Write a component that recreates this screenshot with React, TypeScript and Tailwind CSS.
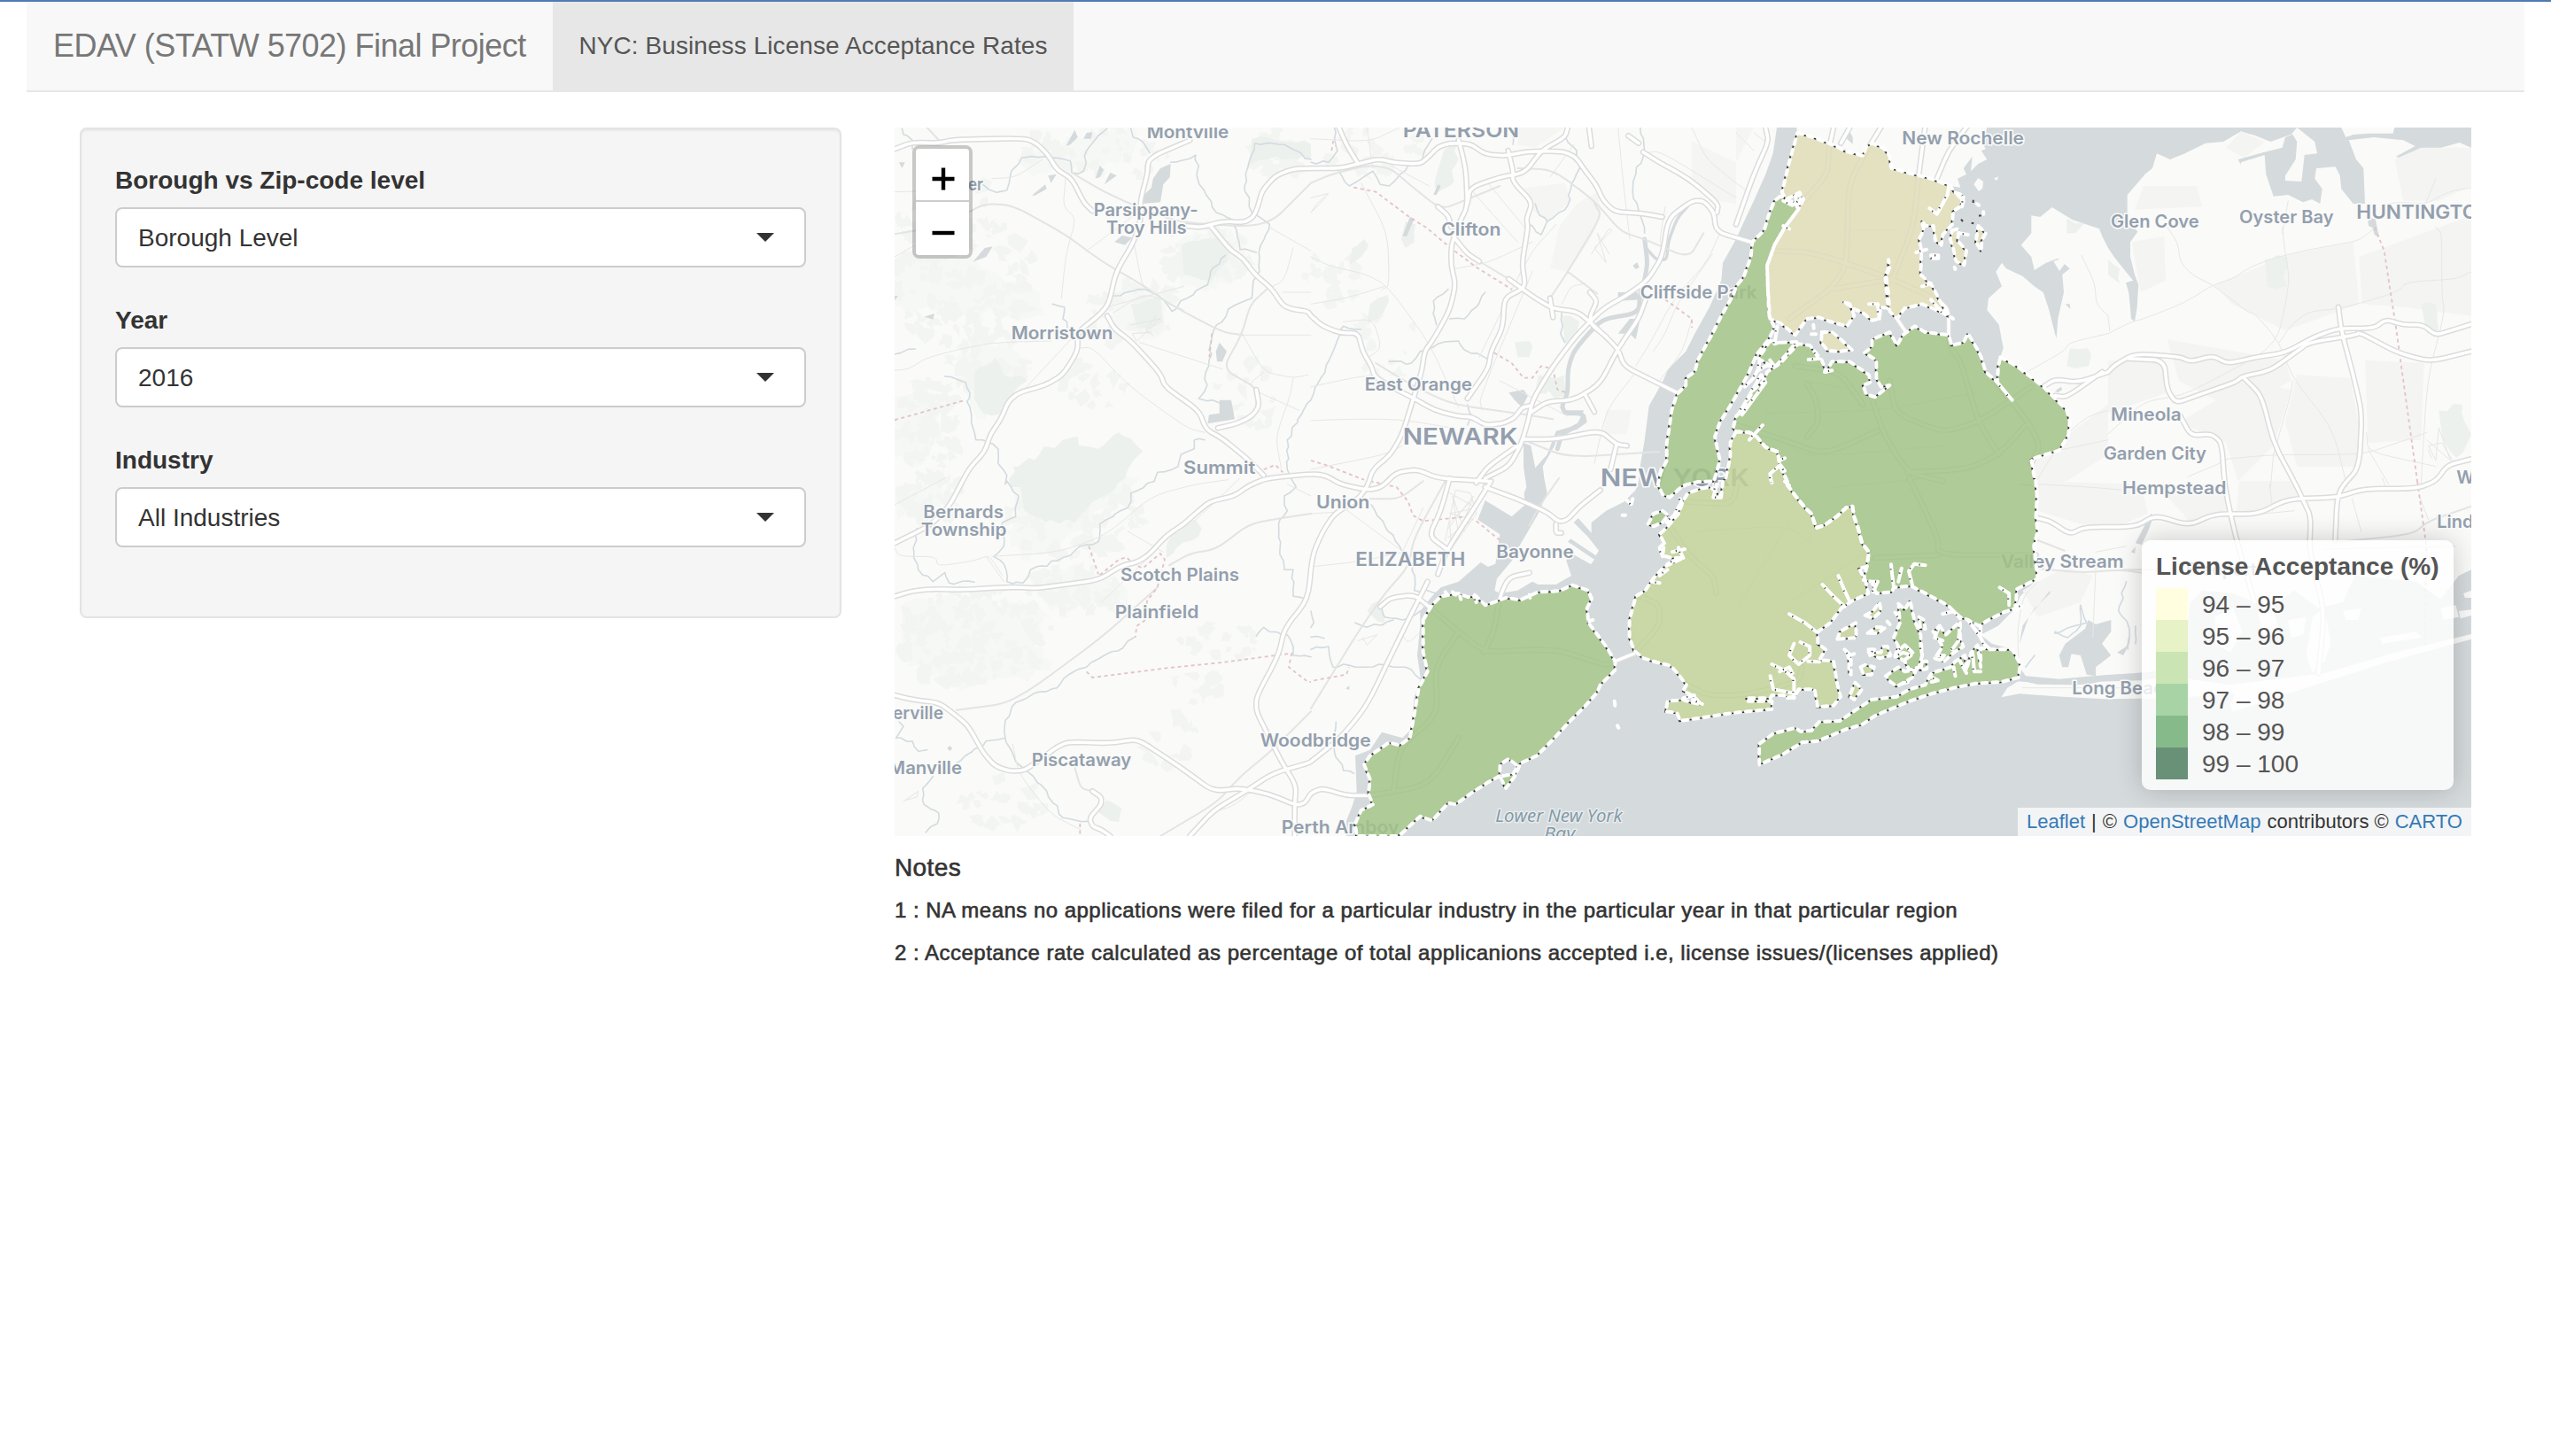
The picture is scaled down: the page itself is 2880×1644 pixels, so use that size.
import React from "react";

/* ---------- map geometry ---------- */

type TileId = "A" | "B" | "C" | "D" | "E" | "F" | "G" | "H";

// Each map tile has an origin on the page and a local grid: [x, y, unit width, unit height].
const TILES: Record<TileId, [number, number, number, number]> = {
  A: [1000, 130, 1 / 3, 1 / 3],
  B: [1480, 130, 1 / 3, 1 / 3],
  C: [1960, 130, 1 / 3, 1 / 3],
  D: [2380, 130, 1 / 3, 1 / 3],
  E: [1000, 540, 1 / 3, 1 / 3],
  F: [1480, 540, 1 / 3, 1 / 3],
  G: [1820, 540, 0.35714, 1 / 3],
  H: [2280, 540, 0.34439, 1 / 3],
};

function pt(t: TileId, x: number, y: number): [number, number] {
  const [ox, oy, sx, sy] = TILES[t];
  return [ox + x * sx, oy + y * sy];
}

// "A 1,2 3,4 B 5,6" -> one list of page points.
function pts(src: string): [number, number][] {
  let tile: TileId = "A";
  const out: [number, number][] = [];
  for (const w of src.trim().split(/\s+/)) {
    if (w.length === 1 && w >= "A" && w <= "H") {
      tile = w as TileId;
      continue;
    }
    const [x, y] = w.split(",").map(Number);
    out.push(pt(tile, x, y));
  }
  return out;
}

function line(src: string): string {
  return "M" + pts(src).map(([x, y]) => `${x.toFixed(1)} ${y.toFixed(1)}`).join("L");
}

// Line with its corners rounded, for roads.
function curve(src: string): string {
  const p = pts(src);
  if (p.length < 3) return line(src);
  let d = `M${p[0][0].toFixed(1)} ${p[0][1].toFixed(1)}`;
  for (let i = 1; i < p.length - 1; i++) {
    const a = p[i - 1], b = p[i], c = p[i + 1];
    const m1 = [b[0] + (a[0] - b[0]) * 0.35, b[1] + (a[1] - b[1]) * 0.35];
    const m2 = [b[0] + (c[0] - b[0]) * 0.35, b[1] + (c[1] - b[1]) * 0.35];
    d += `L${m1[0].toFixed(1)} ${m1[1].toFixed(1)}Q${b[0].toFixed(1)} ${b[1].toFixed(1)} ${m2[0].toFixed(1)} ${m2[1].toFixed(1)}`;
  }
  const e = p[p.length - 1];
  return d + `L${e[0].toFixed(1)} ${e[1].toFixed(1)}`;
}

const area = (s: string) => line(s) + "Z";

function rng(seed: number) {
  let s = seed;
  return () => {
    s = (s * 1664525 + 1013904223) % 4294967296;
    return s / 4294967296;
  };
}

// Line with small irregular wiggles, for streams and shores.
function wiggle(src: string, amp: number, step: number, seed: number): string {
  const r = rng(seed);
  const p = pts(src);
  let d = `M${p[0][0].toFixed(1)} ${p[0][1].toFixed(1)}`;
  for (let i = 1; i < p.length; i++) {
    const a = p[i - 1], b = p[i];
    const n = Math.max(1, Math.round(Math.hypot(b[0] - a[0], b[1] - a[1]) / step));
    for (let k = 1; k <= n; k++) {
      const j = k === n ? 0 : amp;
      d += `L${(a[0] + ((b[0] - a[0]) * k) / n + (r() - 0.5) * j).toFixed(1)} ${(a[1] + ((b[1] - a[1]) * k) / n + (r() - 0.5) * j).toFixed(1)}`;
    }
  }
  return d;
}

// Scatter of wooded patches: [tile, cx, cy, rx, ry, count].
const WOODS: [TileId, number, number, number, number, number][] = [
  ["A", 260, 560, 240, 230, 120],
  ["A", 330, 860, 160, 130, 50],
  ["A", 140, 1060, 110, 170, 70],
  ["A", 200, 330, 170, 150, 34],
  ["A", 700, 130, 260, 90, 40],
  ["A", 1080, 470, 160, 120, 40],
  ["A", 820, 660, 180, 110, 40],
  ["A", 1330, 120, 100, 90, 40],
  ["A", 690, 930, 120, 80, 20],
  ["A", 1230, 950, 110, 120, 20],
  ["E", 300, 540, 270, 170, 130],
  ["E", 640, 140, 230, 130, 80],
  ["E", 150, 70, 130, 80, 40],
  ["E", 640, 380, 180, 80, 44],
  ["E", 1120, 560, 160, 70, 24],
  ["E", 1050, 720, 90, 60, 12],
  ["E", 400, 1090, 150, 90, 22],
  ["E", 980, 900, 120, 90, 14],
  ["B", 220, 120, 180, 80, 24],
  ["B", 80, 560, 110, 110, 18],
  ["B", 250, 760, 110, 160, 14],
  ["D", 300, 200, 250, 120, 20],
  ["D", 700, 480, 330, 160, 40],
  ["D", 900, 700, 300, 200, 40],
  ["D", 300, 650, 200, 150, 18],
  ["D", 1050, 950, 160, 180, 20],
];

function woodsPath(): string {
  let d = "";
  WOODS.forEach(([t, cx, cy, rx, ry, n], i) => {
    const r = rng(77 + i * 131);
    for (let k = 0; k < n; k++) {
      const a = r() * Math.PI * 2;
      const q = Math.sqrt(r());
      const x = cx + Math.cos(a) * q * rx;
      const y = cy + Math.sin(a) * q * ry;
      const v = 5 + Math.floor(r() * 5);
      const size = 10 + r() * 22;
      for (let m = 0; m < v; m++) {
        const b = (m / v) * Math.PI * 2 + r() * 0.7;
        const q2 = size * (0.25 + r() * 1.1);
        const [px, py] = pt(t, Math.max(t === "A" || t === "E" ? 30 : -99, x + Math.cos(b) * q2), y + Math.sin(b) * q2);
        d += `${m ? "L" : "M"}${px.toFixed(1)} ${py.toFixed(1)}`;
      }
      d += "Z";
    }
  });
  return d;
}

// Large, very pale wooded tracts.
const TRACTS = [
  "A 30,490 120,470 250,480 330,520 400,560 520,600 540,680 450,700 380,660 300,690 200,640 110,660 30,650",
  "A 240,820 340,780 440,800 500,860 460,920 400,990 310,1030 270,940",
  "A 30,950 120,900 180,960 190,1080 130,1180 30,1160",
  "A 440,150 560,110 680,60 820,42 860,90 800,150 700,190 620,150 500,210",
  "A 990,430 1130,390 1230,420 1210,520 1120,590 1000,590",
  "A 760,600 860,580 950,640 960,720 870,760 780,720",
  "E 60,420 200,400 320,420 460,410 560,470 500,570 560,620 480,690 380,680 260,720 140,660 50,600",
  "E 430,40 600,0 860,0 780,90 640,180 560,250 460,280 420,200 450,120",
  "E 30,30 180,0 220,60 150,110 40,140",
  "E 480,330 620,300 700,330 800,360 820,430 720,400 560,450",
];

const PARKS = [
  "A 300,870 370,820 400,880 460,880 480,900 430,950 400,1000 330,1010 300,960",
  "A 420,1260 430,1190 520,1150 600,1100 650,1090 655,1120 720,1130 790,1075 870,1140 820,1200 780,1260",
  "E 450,0 780,0 760,50 700,80 640,150 540,150 470,110",
  "E 950,230 970,190 1050,140 1070,170 1040,210 950,270",
  "E 720,1130 750,1090 800,1120 790,1165 760,1160",
  "B 450,120 495,105 500,150 470,240 430,260 420,220",
  "B 130,510 140,450 180,420 195,440 170,480",
  "B 320,360 355,370 350,430 320,450 305,420",
  "B 200,640 260,610 245,670 190,705",
  "B 850,680 910,700 900,760 860,770",
  "B 770,880 860,880 860,950 760,940",
  "B 690,770 740,765 740,820 700,820",
  "F 190,450 230,415 240,450 250,490 210,470",
  "C 1120,350 1180,365 1150,400 1120,400",
  "C 1130,790 1190,790 1195,850 1120,850",
  "A 1000,440 1130,400 1180,450 1100,560 1010,540",
  "A 1240,80 1440,100 1440,150 1290,150 1230,170",
  "A 830,640 930,620 940,700 850,720",
  "D 530,490 605,480 605,580 540,580",
  "D 1060,640 1110,640 1120,730 1080,740",
  "D 1120,1000 1200,980 1230,1080 1180,1160 1130,1080",
  "D 0,490 40,520 40,570 0,540",
];

const URBAN = [
  "B 700,42 860,42 760,110 700,100",
  "B 840,380 900,300 970,260 985,340 940,430 870,530 810,520",
  "B 700,250 860,230 880,290 800,360 760,330",
  "B 1290,90 1440,160 1440,300 1380,290 1290,220",
  "B 1000,1000 1085,1000 1070,1080 990,1080",
  "C 0,160 60,42 0,42",
  "D 80,430 190,410 195,560 110,600",
  "D 120,240 300,240 320,310 90,320",
  "D 400,110 450,55 530,90 460,145",
  "D 360,575 620,470 830,430 850,640 600,730 420,640",
  "D 850,480 1230,340 1230,680 1000,650 860,640",
  "D 970,150 1060,110 1230,110 1230,240 1120,290 1000,290",
  "D 200,760 600,830 620,900 430,1000 240,900",
  "D 0,830 190,840 200,940 0,1010",
  "D 240,1040 480,900 620,930 560,1120 440,1240 400,1110",
  "D 640,880 820,890 850,1050 850,1190 640,1190 600,1040",
  "D 870,830 1070,840 1060,1100 880,1110",
  "C 1000,1180 1140,1070 1260,980 1260,1150 1120,1240 1010,1250",
  "H 60,10 400,20 420,120 330,160 200,155 60,110",
  "H 450,20 680,20 690,110 560,150",
  "H 720,10 890,10 910,60 790,120 710,120",
  "H 10,380 150,300 240,330 200,420 60,470",
];

const WATER_MAIN =
  "C 138,42 125,130 100,200 60,290 20,375 B 1440,420 1395,500 1390,560 1350,650 1300,740 1270,800 1210,860 1190,905 1145,985 1130,1100 1115,1190 1110,1240 " +
  "F 1100,40 1060,80 1000,110 950,150 950,185 905,135 890,150 940,200 975,245 965,262 880,205 870,215 960,275 948,292 875,250 865,280 882,330 830,360 770,360 750,350 700,380 640,390 622,380 630,340 680,280 700,240 735,180 770,120 800,50 790,0 " +
  "B 785,1190 825,1120 835,1085 900,1065 935,1040 930,1015 850,1000 840,985 855,1000 925,1000 900,1050 830,1070 800,1150 760,1195 745,1120 720,1110 720,1190 730,1260 " +
  "F 722,50 725,90 680,130 590,75 565,140 640,190 625,290 600,300 575,285 500,350 440,370 410,400 370,450 370,500 360,600 372,680 350,740 340,850 310,880 240,860 200,920 150,940 155,1060 140,1110 120,1160 120,1212 " +
  "H 1481,1212 1481,0 D 1230,42";

const WESTCHESTER =
  "C 205,42 208,60 325,100 430,138 460,95 500,115 520,140 525,180 600,200 660,215 725,240 760,245 750,215 780,200 770,180 800,140 795,190 820,165 850,150 830,120 845,115 835,95 850,42";

const LONG_ISLAND =
  "C 895,820 905,790 890,710 850,660 855,620 900,580 880,530 900,500 915,520 970,545 1010,580 1040,600 1060,660 1080,740 1085,755 1090,690 1110,600 1105,540 1130,520 1090,485 1050,500 1010,525 1000,480 965,440 1000,400 1000,340 1030,345 1070,312 1140,355 1230,385 1240,410 " +
  "D 0,450 20,480 60,530 85,560 60,568 70,600 75,650 78,690 90,700 98,650 103,575 90,540 75,480 75,430 100,395 65,350 65,270 125,200 150,180 165,130 210,150 260,130 330,95 390,90 450,55 500,70 550,90 620,65 640,42 700,90 708,130 665,135 655,225 600,222 600,205 635,150 640,90 625,65 600,75 590,110 530,125 440,150 460,190 470,230 455,250 445,190 450,160 530,135 535,200 560,275 610,270 660,295 690,285 718,300 725,250 700,215 705,180 770,175 785,205 790,250 830,300 870,300 865,180 840,150 815,85 900,75 1000,85 1040,105 975,140 1000,150 1060,160 1085,222 1108,210 1100,160 1050,115 1100,118 1190,93 1230,110 1230,1260 " +
  "H 1481,310 1440,330 1380,410 1300,350 1100,330 1060,420 980,440 900,380 820,440 700,390 600,380 560,420 550,500 520,600 480,650 380,660 300,665 240,670 130,680 20,670 0,640 G 1265,580 1200,560 1165,530 1220,500 1275,440 1290,400 1345,340 1333,230 1340,100 1338,0 C 1005,1230 1000,1165 1095,1135 1130,1040 1120,1000 1040,920 950,850";

const BEACH = "H -60,742 -40,710 0,685 60,698 170,700 230,690 400,685 500,672 690,700 1000,660 1250,585 1481,528 1481,545 1200,625 1000,690 700,790 690,770 705,730 500,745 280,748 140,740 0,730";

const ISLANDS = [
  "C 805,235 820,213 837,225 835,248 822,258",
  "C 872,215 888,208 884,222",
  "C 1075,495 1095,488 1112,505 1095,528",
  "D 790,42 970,42 965,62 880,62 830,66 805,75",
  "H 640,470 700,440 730,520 690,590 640,560",
  "H 780,450 830,430 850,510 800,540",
  "H 880,480 940,470 930,530 890,540",
  "H 960,470 1000,440 1020,560 1000,620 960,660 940,600",
  "H 1060,450 1120,440 1110,480 1070,480",
  "H 1180,540 1300,520 1320,540 1190,560",
  "H 1380,440 1430,430 1440,470 1390,480",
  "H 1455,390 1481,380 1481,405 1460,405",
  "H 1440,450 1481,445 1481,465 1445,475",
];

const PONDS = [
  "A 905,215 930,180 965,165 962,210 940,235 930,295 870,300 875,270 900,245",
  "A 775,430 800,408 835,415 810,440",
  "A 610,105 640,50 650,75 625,100",
  "A 710,215 725,170 738,185 725,210",
  "A 740,235 760,195 782,205",
  "A 495,272 540,235 545,250 505,272",
  "A 550,205 578,200 560,230",
  "A 295,497 335,450 362,445 340,480",
  "A 130,683 165,672 160,692",
  "A 1118,800 1130,770 1155,800 1140,835 1122,835",
  "A 1130,965 1170,965 1182,1030 1090,1045 1095,1015 1130,1010",
  "A 680,60 700,58 695,80 670,80",
  "A 45,160 65,160 55,180",
  "A 30,612 42,612 30,628",
  "B 310,410 335,345 350,350 325,410",
  "B 415,270 430,235 440,240 425,270",
  "B 670,940 720,930 735,950 715,990 690,965",
  "B 1090,510 1105,498 1112,515 1100,522",
  "B 1040,600 1105,600 1110,625 1040,630",
  "B 1040,740 1080,690 1115,690 1100,760 1080,740",
  "C 378,42 395,75 395,98 375,80",
  "C 1080,935 1100,920 1105,930 1090,940",
  "C 1115,640 1130,640 1132,657",
  "D 880,350 905,350 918,415 902,405 895,380 882,375",
  "H 380,220 430,120 440,125 425,170 400,225",
  "H 365,250 380,232 378,255",
  "H 1200,325 1215,330 1205,345",
  "F 118,712 130,703 130,718",
  "E 208,915 217,906 226,915 217,924",
  "H 130,600 150,560 215,510 225,480 250,495 300,480 300,520 270,560 300,600 250,640 250,670 220,665 200,600 170,595 160,640 140,640",
  "H 0,560 30,470 100,380 100,390 50,440 10,500",
  "H 320,590 350,570 365,530 360,560 340,600",
];

const STREAMS = [
  "A 55,45 60,65 90,85 90,115",
  "A 330,235 375,262 410,255 425,190 450,165 460,145 540,140 625,155 630,195 670,190 680,120 750,45",
  "A 830,45 838,75 870,90 895,128",
  "A 965,160 1050,135 1062,235 1085,270 1120,330 1175,355 1190,410 1200,455 1255,465",
  "A 1150,475 1100,530 1090,575 1020,620 970,665 940,625 880,590 770,612",
  "A 1440,150 1350,100 1250,95 1230,160 1215,240 1240,330 1300,370 1270,440 1265,530 1245,560 1240,620 1180,645 1110,730 1095,830 1080,935 1060,960 1130,975",
  "A 565,640 605,650 600,690 615,720",
  "A 200,885 270,905 285,940 275,970 290,1015 305,1100 340,1105 380,1130 380,1180 410,1220 405,1250 E 410,10 450,60 440,130 395,150 400,230 365,265 400,290 410,350 465,355 490,310 580,280 680,225 720,215 725,155 820,100 830,50 910,10 A 920,1210 990,1190 1000,1150 1045,1130 1045,1100 1080,1100",
  "A 30,810 100,792",
  "A 1440,965 1410,1010 1360,1100 1360,1200 1390,1260 E 1350,60 1360,110 1335,140 1335,240 1350,310 1380,310 1380,400 1430,410",
  "E 105,170 95,270 110,310 160,350 200,320 215,355 300,352",
  "E 840,540 785,585 740,600 680,640 620,665 580,710 500,730 440,760 405,820 405,880 440,960 500,1010 545,1060 600,1150 700,1170",
  "E 240,965 340,890 405,880",
  "E 45,825 60,840 35,880 90,890 110,925 140,920",
  "E 160,1010 125,1050 130,1105 180,1135 175,1170 135,1200",
  "E 1255,535 1280,505 1300,520 1360,530 1380,570 1380,600 1440,605",
  "B 0,160 60,160 90,120 80,42",
  "B 95,190 130,240 210,190 235,235 265,240 330,170 380,160 385,120 410,80",
  "B 675,42 685,100",
  "B 760,300 775,340 800,360 840,330 870,305 880,250 910,180 900,120 865,80",
  "B 740,370 780,405 800,360",
  "B 1115,42 1130,120 1100,200 1090,260 1105,300 1130,400",
  "B 590,600 560,650 520,690 470,690",
  "B 465,590 415,630 425,710",
  "B 265,835 340,840 370,800 430,775 500,765 520,795 605,830",
  "B 170,725 110,715 95,750 0,965",
  "B 850,670 845,740 860,770",
  "B 530,980 545,1020 530,1050",
  "F 205,90 250,160 300,230 345,290 350,380 430,390",
  "F 240,440 250,470 310,480 370,450",
  "F 150,490 190,505 280,480",
  "F 0,580 60,570 75,640 110,630 180,640 230,630 280,640 320,640 370,680",
  "F 0,450 10,490 0,505",
  "F 0,538 45,542",
  "F 85,825 80,930 110,990 145,1000",
  "G 1480,430 1480,500 1440,540 1400,520",
  "H 200,430 220,490 180,500 115,525",
  "H 350,350 325,450 360,510 355,580",
  "H 380,500 380,560",
  "H 20,640 50,600",
];

const RIVERS_WIDE: [string, number][] = [
  ["B 1130,420 1140,500 1130,560 1115,600 1110,670 990,690 940,740 890,800 870,860 870,940 850,985 860,1010 920,1010 925,1040 850,1080 835,1130", 5],
  ["B 1275,310 1240,350 1210,430 1205,490 1170,490 1135,450", 3.4],
  ["H -10,680 60,685 130,690 220,692 300,672 420,672 520,660", 5],
];

const COUNTY = [
  "A 30,1033 270,965",
  "B 145,245 220,260 340,350 390,380 455,435 480,455 560,515 680,590",
  "B 620,805 680,840 720,890 750,890 780,850 820,860 835,930 865,940",
  "B 1200,625 1290,690 1290,720",
  "B 0,1170 50,1185 180,1235",
  "F 200,10 290,30 330,80 345,125 380,145 530,130",
  "F 560,145 640,210",
  "E 688,230 720,325",
  "E 725,328 790,275 815,268 840,290 870,305 930,255 945,275 920,370 885,415 880,480 850,500 845,540",
  "E 680,655 700,675 960,642 1130,625 1375,593 1365,640 1430,690 1440,690",
  "E 658,1170 658,1212",
  "F 10,685 120,665 130,640",
  "A 1280,1200 1320,1185 1345,1210",
  "D 903,380 935,460 975,720 1000,900 1050,1260",
  "H 1304,10 1333,225 1330,570",
  "A 1105,740 1095,830",
  "B 70,120 75,90 85,105",
];

const MAJOR = [
  "A 30,115 90,92 180,95 230,83 470,78 510,95 550,135 580,185 630,215 670,295 700,325",
  "A 1020,375 1070,380 1140,360 1215,363 1245,345 1260,310 1275,255 1320,205 1380,182 B 0,180 100,180 160,165 230,148 290,162 370,165 400,140 430,108 470,95 540,97 590,132 660,138 740,122 850,122 895,140 930,190 965,235 990,290 1030,328 1120,332 1190,345",
  "A 1030,85 890,145 885,205 862,290 865,350 840,430 780,530 755,640 720,680 650,735 650,800 600,880 540,915 450,940 415,970 390,1030 355,1080 335,1140 285,1195 E 265,0 215,95 150,160 30,220",
  "A 750,680 775,725 830,765 930,875 945,920 1060,1000 1085,1065 1140,1095 1225,1165 1280,1220",
  "A 1100,375 1165,455 1210,485 1250,540 1305,585 1345,645 1380,658 1430,665 B 0,680 40,715 100,738 160,738 175,800 205,850 215,885 280,925 350,960 420,1000 500,1020 545,1022 590,1050 650,1045 690,1025 715,990 740,985",
  "A 1255,930 1265,985 1240,1020 1190,1045 1125,1060",
  "E 30,400 90,382 160,375 260,378 430,368 510,373 590,362 720,345 800,295 850,285 890,260 950,195 1010,155 1060,110 1100,78 1180,60 1230,25 1290,0 B 0,1215 50,1220 F 100,20 190,40 240,30 290,-20 360,-30 430,0 600,10",
  "E 30,735 90,750 180,760 240,805 280,840 330,930 370,975 420,992 470,990 540,940 580,910 620,893 760,898 840,885 870,895 970,960 1040,1010 1095,1050 1130,1058 1200,1050 1300,1070 1390,1108 1420,1100 F 0,1065 40,1050 120,1075 200,1075",
  "E 700,1060 730,1080 730,1105 690,1150 700,1180 730,1190 760,1212",
  "E 1030,1212 1110,1125 1220,1060 1310,1000 1430,965 F 0,960 100,880 190,770 290,560 395,350",
  "E 1385,1212 1385,1110 1390,1040 1340,960 1290,860 1255,790 1255,740 1330,600 1350,510 1430,410 F 5,260 40,180 80,120 160,70 190,30 B 210,1200 270,1150 310,1080 350,950 375,870 385,800 415,760 470,660 490,575 475,510 475,440 500,370 530,310 525,190 510,120 500,85",
  "B 95,42 120,100 160,165",
  "B 870,42 860,75 780,120 725,195 640,210 540,245 530,300",
  "B 668,120 685,190 683,225 750,295 730,350 735,380 715,500 725,570 715,590 655,620 650,720 610,800 600,860 530,960",
  "B 490,420 530,470 570,495",
  "B 430,310 465,340 475,380",
  "B 670,555 760,620 820,655 900,665 945,700 1040,790 1060,850 1150,895 1240,940",
  "B 810,620 820,685",
  "B 945,600 970,630 945,680 950,710 1000,750",
  "B 942,42 950,105",
  "B 1075,70 1110,95",
  "B 1125,125 1180,160 1280,215 1380,300 1375,330",
  "C 0,415 B 1390,400 1370,380 1365,330 1330,290 1290,290 1210,350 1190,480 1140,560 1070,610 990,655 900,745 820,850 750,965 735,1040 710,1120 670,1190 F 590,0",
  "B 740,1010 800,970 890,965 980,910 1040,790 1110,690 1135,620",
  "B 720,1098 830,1098 980,1068 1035,1115 1070,1120",
  "B 1035,1115 1015,1200",
  "B 930,950 960,1005",
  "B 700,1120 600,1190 560,1245",
  "F 590,30 700,70 800,115 840,148 870,140 910,95 980,40",
  "F 610,10 560,90 460,245 430,325",
  "F 470,0 440,110 400,195 460,240",
  "F 830,155 830,185 848,185",
  "F 740,320 670,335 640,400 620,520 585,590",
  "F 235,435 270,405 350,395 400,435 500,520 590,590 740,580 850,585 1000,635 1030,620",
  "F 500,520 420,640 430,800 300,910 280,1060",
  "F 200,1075 400,1040 500,880",
  "D 0,870 25,845 90,808 240,818 280,835 355,815 405,842 500,820 600,805 700,750 780,722 900,722 940,692 1000,710 1065,710 1110,745 1160,730 1230,708",
  "D 70,825 190,830 200,930 230,975 300,950 430,905 455,885 550,865 640,800 680,770 840,745 850,735 980,805 1090,835 1230,800",
  "D 780,650 790,730 830,880 860,1010 850,1195 790,1260 H 1040,80 1035,210",
  "D 460,890 520,950 560,1110 640,1260 H 930,75 955,130 950,250 1000,450 980,660",
  "D 245,1020 280,1085 350,1080 385,1110 395,1260 H 700,160 720,240 770,420",
  "D 1230,1165 1150,1185 1110,1240 H 1300,35 1130,35 1040,65 880,70 780,122 640,120 555,160 445,125 380,165 215,165 165,190 100,145 60,135",
  "C 0,370 60,200 110,90 100,42",
  "C 0,415 50,430",
  "C 330,42 315,110 310,200 230,290",
  "C 385,42 355,95",
  "C 490,42 430,140 380,240 375,510 320,590 180,690",
  "C 640,42 620,190 600,380 530,555",
  "C 780,42 720,120 680,215",
  "C 1040,920 1080,895 1160,905 1260,870",
  "C 1080,950 1120,955 1240,870",
  "C 130,460 260,465 530,555 690,630 720,660 720,780 760,830 820,1040 890,1150",
  "C 320,590 530,555",
  "C 545,690 575,735",
  "C 240,910 270,960 280,1040 240,1090",
  "C 460,960 500,1080 580,1210 700,1240",
  "C 520,900 540,1010 700,1075 820,1040 1000,920",
  "C 880,905 990,1040 1030,1120 1000,1180",
  "C 0,1050 160,1100 300,1150 480,1070",
  "C 580,1210 780,1200 890,1150 990,1040",
  "C 200,850 350,870 430,980",
  "G 940,0 1030,200 1030,260 1340,260",
  "G 830,270 1030,260",
  "G 180,160 250,270 320,330 330,390",
  "G 240,80 380,90 400,0",
  "G 75,585 150,500 150,430 90,400",
  "G 235,700 300,735 420,735 590,690 600,640",
  "F 1030,620 1105,590",
];

const SECONDARY = [
  "A 30,403 200,375 330,300 430,305 610,405 730,495 870,575 960,640 1140,735 1210,745",
  "A 630,195 740,260 850,310 1000,365 1290,380 1440,230",
  "A 1290,590 1235,640 1205,745 1140,860 1260,925 1255,980",
  "A 140,42 180,85",
  "B 0,230 70,200 190,170 270,180 340,240 440,320 530,285 640,240",
  "B 700,180 820,185 960,290 1050,395 1130,420 1280,485 1330,400",
  "B 960,300 985,340 870,530 810,620",
  "B 570,495 670,555",
  "B 220,840 350,920 480,980 700,1010 820,1030",
  "B 870,530 970,605",
  "B 720,1100 870,1160 1180,1140",
  "E 240,785 400,765 500,710 730,540 920,370",
  "E 960,295 1030,255 1120,240 1230,155 1340,135 1440,120",
  "E 930,1212 1120,1100 1200,1010 1310,920 1440,790",
  "E 640,980 660,1050 700,1060",
  "F 0,780 160,520 250,390 330,300 350,200 460,0",
  "F 200,70 300,70 380,10",
  "F 740,160 770,100 840,0",
  "H 0,20 40,25",
  "H 1050,215 1290,190 1340,145 1481,95",
  "H 340,310 450,310",
  "H 0,300 200,320 330,310 400,320",
  "G 1345,210 1430,245",
];

const MINOR = [
  "A 30,260 100,258", "A 30,865 80,860 140,820 350,770 560,765", "A 650,735 440,960",
  "A 610,210 600,310 645,350 610,470 595,620", "A 650,790 700,785 820,915 1020,1060 1080,1075",
  "A 770,670 880,600 1010,660", "A 840,430 865,560 880,590", "A 1380,450 1350,560 1290,590",
  "A 1345,600 1440,600", "A 1210,745 1440,745", "A 1210,745 1280,870 1380,890 1430,880", "A 1140,860 860,770 ",
  "A 1280,870 1220,920 1400,1000", "A 1300,380 1440,460", "A 360,215 440,210 530,150", "A 30,480 100,440",
  "A 680,460 840,340", "A 750,650 1010,580", "A 1380,890 1370,950 1320,1090 1340,1200",
  "E 30,235 45,265 170,265 175,298 300,280 350,260 395,330", "E 360,265 590,250 750,190 900,60 1050,20 1160,5",
  "E 340,265 400,350", "E 730,420 900,260", "E 1040,150 1200,0", "E 430,900 450,1000 560,1140 660,1190",
  "E 30,90 200,0", "E 1110,1130 1180,1110 1310,1000", "E 1360,20 1440,60", "E 940,250 820,180",
  "B 0,80 200,90 300,42", "B 270,170 400,240", "B 190,42 210,180", "B 170,230 260,400 265,580 240,590",
  "B 0,480 60,510 190,540 260,580 400,770 500,990", "B 0,640 120,620 250,580", "B 540,250 700,430",
  "B 600,230 740,400", "B 810,210 890,100", "B 570,820 740,470 830,370", "B 490,520 600,500 750,430",
  "B 580,1000 570,960 750,530", "B 0,1035 120,1030 300,1030 480,1060", "B 0,1200 250,1150 310,1120",
  "B 110,700 210,690 240,790 180,830", "B 0,920 140,890 215,880", "B 1130,130 1180,120 1440,280",
  "B 1040,42 1060,250 1080,420", "B 1200,460 1180,430 1200,310", "B 1390,390 1340,500 1230,620 1150,770 1100,850",
  "B 1360,470 1240,640 1200,740 1160,800", "B 1290,690 1260,800 1180,900", "B 960,1180 1000,1000 1100,870",
  "B 850,640 880,580 930,570", "B 1290,42 1340,150 1440,230", "B 640,900 870,1020",
  "F 0,300 180,280 310,250", "F 110,100 300,240", "F 0,120 80,115", "F 380,100 310,250", "F 300,520 330,560 370,520",
  "C 0,60 60,120", "C 0,230 40,260", "C 1170,475 1215,570 1220,640 1260,680", "C 985,870 1110,800 1130,770 1260,740",
  "C 1010,1250 1110,1090 1190,1020 1260,1000", "C 1095,1135 1260,1100",
  "D 200,380 235,430 245,500 290,545 355,575 470,665 500,675 580,770 625,890 760,1060 810,1260",
  "D 590,380 600,470 615,560 580,745 520,810 370,890 250,950 120,970 0,1080",
  "D 0,740 80,700 120,690 260,635 355,575 420,555 480,515 560,485 600,475 660,460 740,445 850,425 900,385",
  "D 580,770 620,710 680,665 790,655 980,600 1010,565 1180,555 1230,530", "D 1110,380 1130,400 1130,600 1140,670 1080,900 1060,1250",
  "D 610,290 590,400", "D 950,300 990,295 1080,300 1150,260 1230,245", "D 1075,300 1110,215",
  "D 400,1165 560,1150 860,1150 980,1110 1080,1075", "D 560,1150 550,1260", "D 880,1130 950,1250", "D 625,900 620,940 560,1150",
  "D 270,1225 400,1170", "D 875,1075 880,1140 1110,1190", "D 0,680 5,730",
  "H 60,20 230,30 340,40", "H 820,20 830,110", "H 1090,70 1120,180", "H 1190,0 1200,30", "H 800,120 900,110",
  "H 250,250 350,230", "H 240,540 250,300", "H 1000,240 1430,230", "H 1310,60 1340,140",
  "G 1290,670 1280,520 1300,400 1345,350", "H 10,710 390,710",
  "C 60,60 100,90", "C 240,910 270,905 430,940", "C 100,1010 500,1000 700,960 810,940", "C 380,390 540,390",
  "C 160,1100 240,1160 700,1120", "G 260,180 560,160 640,230", "G 400,430 560,150", "G 560,420 820,240", "G 700,30 1000,0",
];

// Airport and rail-yard hatching.
const HATCH = [
  "A 830,710 930,690 850,765 835,740 900,735", "A 915,680 880,730 905,745",
  "B 950,470 1010,385 1020,390 960,450 1000,500 970,400 1010,470", "B 0,280 60,265 20,300 0,330 50,280",
  "F 455,210 490,40 540,50 560,120 475,240 470,150 540,80", "F 465,170 550,60 500,190 480,60 520,180",
  "F 470,50 560,100 470,120 550,140 465,200",
  "F 160,550 225,530 190,565 175,540", "E 60,1095 110,1060 105,1080 70,1090",
  "D 1080,1100 1160,1170 1120,1060 1110,1170 1085,1120 1130,1110 1170,1175",
  "D 1085,1135 1095,1160",
];

type Borough = { fill: string; shapes: string[] };

const BOROUGHS: Borough[] = [
  {
    fill: "#dedcb7",
    shapes: [
      "C 208,60 260,75 325,100 370,122 430,138 440,108 460,95 500,112 520,140 525,180 600,200 660,215 725,240 740,262 772,272 760,310 735,325 732,370 700,405 695,440 675,425 668,375 640,375 630,358 635,390 620,420 628,460 625,540 665,580 690,630 710,665 735,690 690,665 630,640 570,655 545,690 520,665 515,600 508,545 520,515 516,490 516,520 505,545 510,600 515,655 490,650 485,690 460,695 430,670 395,655 365,632 385,640 400,680 375,715 320,700 280,685 240,690 200,745 150,705 115,690 108,600 105,510 130,440 165,380 210,320 228,285 215,262 170,285 155,262 180,160",
      "C 732,390 755,385 750,425 780,460 772,508 745,495 735,450 725,420",
      "C 820,375 845,400 832,425 830,460 812,430",
      "C 290,735 325,735 350,755 392,795 350,800 310,798 288,770",
    ],
  },
  {
    fill: "#a2c287",
    shapes: [
      "C 150,275 130,290 110,340 95,390 55,430 50,480 25,550 0,580 B 1430,610 1390,680 1360,740 1310,830 1300,870 1270,890 1270,915 1240,945 1222,1000 1212,1070 1205,1110 1205,1170 1185,1210 F 1175,20 1190,55 1215,65 1260,25 1310,12 1365,10 B 1385,1170 1368,1090 1385,1040 1420,985 C 0,950 40,880 70,810 110,760 130,720 112,680 108,600 105,510 130,440 165,380 210,320 200,295 175,290",
      "C 115,765 150,770 205,768 170,810 130,855 75,825",
      "C 200,275 222,270 215,300 205,295",
      "F 1142,155 1160,120 1190,110 1210,125 1190,150 1160,163",
    ],
  },
  {
    fill: "#a2c287",
    shapes: [
      "C 895,820 950,850 1040,920 1120,1000 1130,1040 1125,1085 1095,1135 1000,1165 1010,1230 G 1338,0 1343,60 1340,130 1345,180 1333,230 1345,340 1280,375 1275,440 1235,455 1190,480 1160,500 1125,480 1100,470 1060,430 1000,395 945,365 890,370 885,385 835,390 820,350 795,345 805,300 812,250 790,220 778,170 765,130 760,95 740,100 710,130 670,160 645,168 630,120 610,100 580,60 545,10 C 180,1255 150,1190 140,1140 100,1125 70,1090 45,1075 0,1072 B 1430,1060 C 0,1020 20,1000 60,930 95,900 105,870 150,840 210,775 250,780 290,830 305,870 325,835 385,835 450,880 455,905 430,915 440,945 470,955 490,940 520,915 490,920 475,890 475,830 435,805 460,785 460,760 520,735 545,780 565,745 605,715 640,735 720,745 730,780 770,770 785,740 815,790 830,820 845,870 885,905 888,850",
      "G 465,970 465,900 510,865 580,845 595,858 630,855 655,825 720,822 770,785 820,750 900,740 940,715 990,700 1010,660 1070,640 1085,620 1115,600 1120,650 1135,590 1155,565 1165,640 1165,575 1200,580 1265,580 1290,630 1285,675 1230,690 1150,695 1080,710 1010,730 940,755 830,805 790,835 740,850 650,890 600,895 540,935",
      "G 905,425 925,445 942,415 955,480 975,530 980,600 970,640 940,650 925,620 895,600 905,570 890,540 910,490",
      "G 1035,500 1055,530 1100,485 1100,540 1110,570 1080,590 1050,620 1020,610 1045,570 1015,520",
      "G 865,670 905,640 925,655 960,650 950,675 900,705 880,690",
      "G 970,470 985,480 990,510 975,510",
      "G 980,620 995,620 995,645 975,650",
    ],
  },
  {
    fill: "#c1d198",
    shapes: [
      "C 0,1072 45,1075 70,1090 100,1125 140,1140 150,1190 180,1255 G 545,10 580,60 610,100 630,120 645,168 670,160 710,130 740,100 760,95 765,130 778,170 790,220 812,250 805,300 780,305 800,345 810,390 760,415 725,440 690,490 650,520 650,560 675,580 655,615 700,620 712,700 722,740 700,770 650,775 640,715 590,715 575,745 540,735 505,735 500,745 425,745 430,755 505,755 505,782 380,795 290,810 215,822 205,795 170,790 175,755 225,750 250,760 280,765 260,740 225,720 235,700 210,665 185,635 130,620 100,610 70,585 55,540 55,480 75,400 105,380 130,340 165,300 225,270 190,270 160,262 165,220 150,190 175,165 210,120 225,75 240,50 280,35 310,30 345,60 350,10 B 1405,1230 1420,1160 1420,1110",
      "G 712,545 720,520 770,490 772,540",
      "G 785,640 800,632 828,640 820,665 795,665",
      "G 768,692 790,715 765,750 750,740",
      "G 810,590 845,610 880,600 870,570 855,570 850,590",
      "G 800,465 825,450 845,420 850,450 825,475",
      "G 808,525 835,505 865,505 840,525",
      "G 740,585 755,600 755,665 750,660 748,610",
    ],
  },
  {
    fill: "#a2c287",
    shapes: [
      "F 380,480 410,430 440,400 500,390 530,402 560,400 590,430 620,420 660,405 710,412 770,385 840,382 885,362 940,380 950,410 935,440 940,490 1000,570 1030,620 1030,650 980,700 970,725 930,770 870,830 820,885 765,940 710,965 690,1010 660,1050 640,1010 685,1002 700,975 670,950 640,970 640,1008 600,1030 545,1065 490,1105 465,1100 410,1160 370,1145 305,1205 290,1212 155,1212 150,1170 170,1125 210,1105 195,1070 200,1020 180,970 200,940 265,895 300,905 335,880 350,800 365,710 395,655 380,590",
    ],
  },
];

// Inlets, piers and islets that appear only as outlines.
const OUTLINES = [
  "C 655,315 680,335 700,300 716,270 720,245", "C 450,640 480,640 485,690", "C 885,905 935,965",
  "C 765,310 770,290 750,270", "C 660,475 685,475 685,485 662,485 660,475", "C 740,515 742,522",
  "C 755,400 785,405", "C 815,300 822,305", "C 838,328 838,335", "C 610,465 645,455", "C 630,580 660,570",
  "C 660,625 700,670", "C 245,828 280,825 265,800", "C 262,710 263,722", "C 255,742 270,742",
  "C 300,870 325,865", "C 160,290 190,305 215,290", "C 10,1010 85,880 100,905 20,1015",
  "C 75,865 100,850 130,850 115,830", "C 80,830 75,860 60,890 30,920", "C 45,1100 90,1050", "C 120,1245 115,1215 150,1185 165,1205",
  "C 145,1170 165,1162", "C 140,715 130,775 145,770", "C 160,375 180,385",
  "G 560,460 610,490 645,520", "G 665,360 700,400 735,435", "G 715,330 735,380 750,415",
  "G 595,555 625,570 625,600 590,630 560,600 575,560", "G 505,630 545,650 575,680 575,740 555,745",
  "G 500,670 510,715 580,730", "G 530,655 560,640 570,660", "G 620,620 655,622",
  "G 882,292 885,325 890,365", "G 915,305 905,350", "G 990,295 955,290 938,315 950,365", "G 1225,370 1255,390 1255,430",
  "G 1275,430 1295,435 1280,445", "G 820,350 840,350 825,385", "G 1045,460 1080,450 1100,475",
  "G 1125,480 1160,530 1175,560 1195,580", "G 1100,490 1095,550 1075,580", "G 1165,500 1165,535",
  "G 1035,500 1020,540 1045,550", "G 1025,600 1050,600 1040,615", "G 1080,640 1085,670", "G 1100,620 1120,660",
  "G 1140,590 1145,655 1165,655", "G 1005,670 1030,685 1010,690", "G 975,560 980,600", "G 895,455 905,470",
  "G 870,485 878,495", "G 815,600 830,580 810,580", "G 895,605 920,590 945,600 925,615", "G 900,590 925,565 950,590",
  "G 920,695 935,690", "G 735,580 750,600 765,595", "G 330,20 320,65 345,65",
  "G 160,265 150,235 165,220", "G 190,250 230,240", "G 175,290 215,270", "G 150,330 175,310", "G 125,350 150,355",
  "G 210,235 225,270", "G 225,745 260,735", "G 255,750 285,765", "G 500,0 505,15",
  "F 1070,75 1085,88 1090,70", "F 1055,125 1065,125", "F 1028,755 1030,770", "F 1038,838 1042,845",
  "F 455,385 462,395", "F 480,385 490,395", "F 505,400 508,410", "F 555,395 560,420", "F 740,395 742,405",
  "F 945,395 950,405", "F 955,480 940,485", "F 1205,150 1230,125 1255,80 1250,70",
];

const DARK_SPECKS = ["C 803,287 803,297", "C 762,353 768,360", "C 822,341 830,340", "C 797,365 805,367"];

type Label = { t: TileId; x: number; w?: number; y: number; s: number; text: string; it?: boolean };

const LABELS: Label[] = [
  { t: "A", x: 884, w: 278, y: 79, s: 20, text: "Montville" },
  { t: "A", x: 278, w: 52, y: 255, s: 20, text: "er" },
  { t: "A", x: 704, w: 354, y: 342, s: 20, text: "Parsippany-" },
  { t: "A", x: 747, w: 272, y: 402, s: 20, text: "Troy Hills" },
  { t: "A", x: 425, w: 344, y: 760, s: 20, text: "Morristown" },
  { t: "A", x: 1008, w: 244, y: 1215, s: 20, text: "Summit" },
  { t: "B", x: 311, w: 394, y: 74, s: 23, text: "PATERSON" },
  { t: "B", x: 442, w: 201, y: 407, s: 20, text: "Clifton" },
  { t: "B", x: 1115, w: 395, y: 620, s: 20, text: "Cliffside Park" },
  { t: "B", x: 182, w: 364, y: 933, s: 20, text: "East Orange" },
  { t: "B", x: 311, w: 390, y: 1117, s: 26, text: "NEWARK" },
  { t: "B", x: 980, w: 505, y: 1257, s: 27, text: "NEW YORK" },
  { t: "C", x: 562, w: 413, y: 98, s: 20, text: "New Rochelle" },
  { t: "D", x: 9, w: 299, y: 382, s: 20, text: "Glen Cove" },
  { t: "D", x: 444, w: 320, y: 365, s: 20, text: "Oyster Bay" },
  { t: "D", x: 841, w: 462, y: 352, s: 21.5, text: "HUNTINGTON" },
  { t: "D", x: 9, w: 239, y: 1034, s: 20, text: "Mineola" },
  { t: "D", x: -16, w: 349, y: 1167, s: 20, text: "Garden City" },
  { t: "D", x: 1180, y: 1247, s: 20, text: "West" },
  { t: "H", x: 337, w: 352, y: 53, s: 20, text: "Hempstead" },
  { t: "H", x: 1368, y: 167, s: 20, text: "Lind" },
  { t: "H", x: -61, w: 416, y: 303, s: 20, text: "Valley Stream" },
  { t: "H", x: 172, w: 348, y: 733, s: 20, text: "Long Beach" },
  { t: "H", x: 545, w: 240, y: 330, s: 20, text: "Freeport" },
  { t: "E", x: 127, w: 272, y: 135, s: 20, text: "Bernards" },
  { t: "E", x: 119, w: 290, y: 195, s: 20, text: "Township" },
  { t: "E", x: 795, w: 402, y: 347, s: 20, text: "Scotch Plains" },
  { t: "E", x: 776, w: 284, y: 473, s: 20, text: "Plainfield" },
  { t: "E", x: 24, w: 171, y: 815, s: 20, text: "erville" },
  { t: "E", x: 10, w: 248, y: 1003, s: 20, text: "Manville" },
  { t: "E", x: 494, w: 338, y: 976, s: 20, text: "Piscataway" },
  { t: "E", x: 1268, w: 375, y: 910, s: 20, text: "Woodbridge" },
  { t: "E", x: 1340, w: 398, y: 1202, s: 20, text: "Perth Amboy" },
  { t: "F", x: 18, w: 181, y: 102, s: 20, text: "Union" },
  { t: "F", x: 151, w: 372, y: 297, s: 21.5, text: "ELIZABETH" },
  { t: "F", x: 628, w: 262, y: 271, s: 20, text: "Bayonne" },
  { t: "F", x: 625, w: 429, y: 1164, s: 19.5, text: "Lower New York", it: true },
  { t: "F", x: 790, w: 104, y: 1224, s: 19.5, text: "Bay", it: true },
];

function BaseMap() {
  return (
    <svg viewBox="1010 144 1780 800" className="block h-[800px] w-[1780px]" fill="none" strokeLinejoin="round" strokeLinecap="round">
      <rect x="1010" y="144" width="1780" height="800" fill="#fafaf8" />
      <path d={TRACTS.map((t, i) => wiggle(t, 12, 8, 5 + i * 29) + "Z").join("")} fill="#f6f8f5" />
      <path d={woodsPath()} fill="#f3f5f2" />
      <path d={URBAN.map(area).join("")} fill="#f5f5f3" />
      <path d={area(WATER_MAIN)} fill="#d5dadd" />
      <path d={[WESTCHESTER, LONG_ISLAND, BEACH, ...ISLANDS].map(area).join("")} fill="#fafaf8" />
      <path d={URBAN.slice(6).map(area).join("")} fill="#f4f4f2" />
      <path d={PARKS.map((t, i) => wiggle(t, 8, 9, 3 + i * 41) + "Z").join("")} fill="#edf1ee" />
      <path d={BOROUGHS.flatMap((b) => b.shapes).map(area).join("")} fill="#fafaf8" />
      <path d={PONDS.map(area).join("")} fill="#d5dadd" />
      <path d={STREAMS.map((s, i) => wiggle(s, 4, 7, 11 + i * 17)).join("")} stroke="#d3dbe0" strokeWidth="1.6" />
      {RIVERS_WIDE.map(([s, w]) => (
        <path key={s} d={curve(s)} stroke="#d5dadd" strokeWidth={w} />
      ))}
      <path d={MINOR.map(curve).join("")} stroke="#e7e7e6" strokeWidth="1" />
      <path d={HATCH.map(line).join("")} stroke="#e6e6e6" strokeWidth="1" />
      <path d={SECONDARY.map(curve).join("")} stroke="#e4e4e4" strokeWidth="2" />
      <path d={COUNTY.map(line).join("")} stroke="#e2c3c9" strokeWidth="1.8" strokeDasharray="4 3.6" strokeLinecap="butt" />
      <path d={MAJOR.map(curve).join("")} stroke="#dcdcdc" strokeWidth="6.6" />
      <path d={MAJOR.map(curve).join("")} stroke="#ffffff" strokeWidth="3.6" />
      {LABELS.map((l) => {
        const [x, y] = pt(l.t, l.x, l.y);
        return (
          <text
            key={l.text + l.x}
            x={x}
            y={y}
            fontSize={l.s}
            fill={l.it ? "#7f98a5" : "#939fae"}
            stroke={l.it ? "#e6eaec" : "#fafaf8"}
            strokeWidth="3.2"
            paintOrder="stroke"
            textLength={l.w ? l.w / 3 : undefined}
            lengthAdjust="spacingAndGlyphs"
            className={l.it ? "font-['Open_Sans',sans-serif] font-normal italic" : "font-['Inter',sans-serif] font-semibold"}
          >
            {l.text}
          </text>
        );
      })}
      {BOROUGHS.map((b, i) => (
        <path key={i} d={b.shapes.map(area).join("")} fill={b.fill} fillOpacity="0.86" />
      ))}
      <path d={BOROUGHS.flatMap((b) => b.shapes).map(area).join("")} stroke="#333333" strokeWidth="1.7" strokeLinecap="butt" transform="translate(-0.7 0.5)" />
      {BOROUGHS.map((b, i) => (
        <path key={i} d={b.shapes.map(area).join("")} stroke="#ffffff" strokeWidth="4" strokeDasharray="6 6" />
      ))}
      <path d={OUTLINES.map(line).join("")} stroke="#ffffff" strokeWidth="4" />
      <path d={OUTLINES.map(line).join("")} stroke="#444444" strokeWidth="2.2" strokeDasharray="1.2 12" strokeDashoffset="-5" strokeLinecap="butt" transform="translate(-1 0)" />
      <path d={DARK_SPECKS.map(line).join("")} stroke="#444444" strokeWidth="2" strokeLinecap="butt" />
    </svg>
  );
}

/* ---------- page ---------- */

function SelectField({ label, value }: { label: string; value: string }) {
  return (
    <div className="mb-10">
      <div className="mb-[10px] text-[28px] leading-10 font-bold text-[#333]">{label}</div>
      <div className="flex h-[68px] items-center justify-between rounded-lg border-2 border-[#ccc] bg-white pr-[34px] pl-6">
        <span className="mt-px text-[28px] leading-10 text-[#333]">{value}</span>
        <svg viewBox="0 0 20 10" className="mb-px h-[10px] w-5" fill="#333">
          <path d="M0 0H20L10 10Z" />
        </svg>
      </div>
    </div>
  );
}

const LEGEND: [string, string][] = [
  ["bg-[#ffffe0]", "94 – 95"],
  ["bg-[#e7f2c6]", "95 – 96"],
  ["bg-[#cbe4b4]", "96 – 97"],
  ["bg-[#a8d4a5]", "97 – 98"],
  ["bg-[#86ba8b]", "98 – 99"],
  ["bg-[#699178]", "99 – 100"],
];

export default function App() {
  return (
    <div className="min-h-[1644px] w-[2880px] border-t-2 border-[#4f7ab3] bg-white font-['Liberation_Sans',Arial,sans-serif] text-[#333]">
      <nav className="mx-[30px] flex h-[102px] border-b-2 border-[#e7e7e7] bg-[#f8f8f8]">
        <div className="flex w-[594px] items-center pl-[30px] text-[36px] leading-10 tracking-[-0.53px] whitespace-nowrap text-[#777]">
          EDAV (STATW 5702) Final Project
        </div>
        <div className="flex w-[588px] items-center justify-center bg-[#e7e7e7] text-[28px] leading-10 tracking-[0.08px] whitespace-nowrap text-[#555]">
          NYC: Business License Acceptance Rates
        </div>
      </nav>

      <main className="mt-10 flex items-start gap-[60px] pl-[90px]">
        <aside className="h-[554px] w-[860px] rounded-lg border-2 border-[#e3e3e3] bg-[#f5f5f5] p-[38px] shadow-[inset_0_2px_2px_rgba(0,0,0,0.05)]">
          <SelectField label="Borough vs Zip-code level" value="Borough Level" />
          <SelectField label="Year" value="2016" />
          <SelectField label="Industry" value="All Industries" />
        </aside>

        <section className="w-[1780px]">
          <div className="relative h-[800px] overflow-hidden">
            <BaseMap />

            <div className="absolute top-5 left-5 w-[68px] rounded-lg border-4 border-black/20 bg-clip-padding">
              <div className="flex h-[60px] items-center justify-center rounded-t-[4px] border-b-2 border-[#ccc] bg-white">
                <svg viewBox="0 0 26 26" className="mt-[10px] ml-[2px] h-[26px] w-[26px]" stroke="#000" strokeWidth="4.4">
                  <path d="M13 0.5V25.5M0.5 13H25.5" />
                </svg>
              </div>
              <div className="flex h-[60px] items-center justify-center rounded-b-[4px] bg-white">
                <svg viewBox="0 0 26 26" className="mt-[10px] ml-[2px] h-[26px] w-[26px]" stroke="#000" strokeWidth="4.4">
                  <path d="M0.5 13H25.5" />
                </svg>
              </div>
            </div>

            <div className="absolute right-5 bottom-[52px] h-[282px] w-[352px] rounded-[10px] bg-white/80 px-4 py-3 text-[#555] shadow-[0_0_30px_rgba(0,0,0,0.2)]">
              <div className="mb-[6px] text-[28px] leading-9 font-bold whitespace-nowrap">License Acceptance (%)</div>
              {LEGEND.map(([swatch, range]) => (
                <div key={range} className="flex h-9 items-center gap-4">
                  <div className={`h-9 w-9 ${swatch}`} />
                  <div className="mt-px text-[28px] leading-9 whitespace-nowrap">{range}</div>
                </div>
              ))}
            </div>

            <div className="absolute right-0 bottom-0 flex h-8 w-[512px] items-center justify-between bg-white/70 px-[10px] text-[22px] leading-8 whitespace-nowrap text-[#333]">
              <span className="text-[#337ab7]">Leaflet</span>
              <span>|</span>
              <span>©</span>
              <span className="text-[#337ab7]">OpenStreetMap</span>
              <span>contributors ©</span>
              <span className="text-[#337ab7]">CARTO</span>
            </div>
          </div>

          <div className="mt-4 text-[28px] leading-10 tracking-[0.4px] [-webkit-text-stroke:0.6px_#333]">Notes</div>
          <div className="mt-2 text-[24px] leading-10 tracking-[0.475px] whitespace-nowrap [-webkit-text-stroke:0.6px_#333]">
            1 : NA means no applications were filed for a particular industry in the particular year in that particular region
          </div>
          <div className="mt-2 text-[24px] leading-10 tracking-[0.495px] whitespace-nowrap [-webkit-text-stroke:0.6px_#333]">
            2 : Acceptance rate calculated as percentage of total applicanions accepted i.e, license issues/(licenses applied)
          </div>
        </section>
      </main>
    </div>
  );
}
